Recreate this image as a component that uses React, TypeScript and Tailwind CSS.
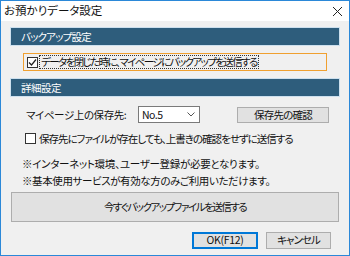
const font = "font-['Noto_Sans_CJK_JP','Noto_Sans',sans-serif] [font-feature-settings:'palt']";

const SectionHeader = ({ label, className = "" }: { label: string; className?: string }) => (
  <div className="mx-[9px] border border-[#cde0ee] bg-[#cde0ee]">
    <div className={`h-[17px] bg-[#2e5d7c] pl-[10px] text-[10.5px] leading-[17px] text-white ${className}`}>
      {label}
    </div>
  </div>
);

const CheckBox = () => (
  <span className="inline-flex h-[11px] w-[11px] shrink-0 items-center justify-center border border-[#333] bg-white" />
);

const CheckedBox = () => (
  <span className="inline-flex h-[11px] w-[11px] shrink-0 items-center justify-center border border-[#333] bg-white">
    <svg width="9" height="9" viewBox="0 0 9 9">
      <path d="M1 4.5 L3.5 7 L8 1.5" fill="none" stroke="#222" strokeWidth="1.2" />
    </svg>
  </span>
);

const WinButton = ({ label, className = "" }: { label: string; className?: string }) => (
  <button className={`flex items-center justify-center border border-[#adadad] bg-[#e1e1e1] text-[10.5px] text-[#111] ${className}`}>
    {label}
  </button>
);

export default function App() {
  return (
    <div className={`${font} flex h-[256px] w-[350px] flex-col border border-[#2b88d8] bg-[#f0f0f0] text-[#111]`}>
      {/* title bar */}
      <div className="flex h-[20px] items-center justify-between bg-white pl-[3px] pr-[6px]">
        <span className="text-[11.5px]">お預かりデータ設定</span>
        <svg width="11" height="11" viewBox="0 0 11 11">
          <path d="M1 1 L10 10 M10 1 L1 10" stroke="#222" strokeWidth="1" />
        </svg>
      </div>

      <div className="flex flex-1 flex-col pt-[6px]">
        <SectionHeader label="バックアップ設定" className="tracking-[-0.8px]" />

        <div className="mx-[22px] mt-[7px] flex h-[18px] items-center gap-[1px] border border-[#f0a030] pl-[3px]">
          <CheckedBox />
          <span className="border border-dotted border-[#333] px-[1px] text-[10.5px] leading-[12px] tracking-[-1.6px]">
            データを閉じた時に、マイページにバックアップを送信する
          </span>
        </div>

        <div className="mt-[7px]">
          <SectionHeader label="詳細設定" className="tracking-[-0.5px]" />
        </div>

        <div className="mt-[9px] flex items-center pl-[25px]">
          <span className="w-[112px] text-[10.5px] tracking-[-0.4px]">マイページ上の保存先:</span>
          <div className="flex h-[17px] w-[62px] items-center justify-between border border-[#7a7a7a] bg-white pl-[3px] pr-[4px] text-[10.5px]">
            <span className="tracking-[-0.5px]">No.5</span>
            <svg width="8" height="5" viewBox="0 0 8 5">
              <path d="M0.5 0.5 L4 4 L7.5 0.5" fill="none" stroke="#555" strokeWidth="1" />
            </svg>
          </div>
          <WinButton label="保存先の確認" className="ml-[37px] h-[16px] w-[92px] tracking-[-0.8px]" />
        </div>

        <div className="mt-[8px] flex items-center gap-[3px] pl-[24px] text-[10.5px] tracking-[-1px]">
          <CheckBox />
          <span>保存先にファイルが存在しても、上書きの確認をせずに送信する</span>
        </div>

        <div className="mt-[10px] pl-[21px] text-[10.5px] leading-[14px] tracking-[-0.3px]">
          ※インターネット環境、ユーザー登録が必要となります。
        </div>
        <div className="mt-[3px] pl-[21px] text-[10.5px] leading-[14px] tracking-[-0.4px]">
          ※基本使用サービスが有効な方のみご利用いただけます。
        </div>

        <WinButton label="今すぐバックアップファイルを送信する" className="mx-[10px] mt-[4px] h-[30px] tracking-[-1.5px]" />

        <div className="mt-[10px] flex justify-end gap-[8px] pr-[18px]">
          <button className="flex h-[17px] w-[66px] items-center justify-center border-2 border-[#0078d7] bg-[#e1e1e1] text-[10.5px] tracking-[-0.3px]">
            OK(F12)
          </button>
          <WinButton label="キャンセル" className="h-[17px] w-[65px] tracking-[-1px]" />
        </div>
      </div>
    </div>
  );
}
